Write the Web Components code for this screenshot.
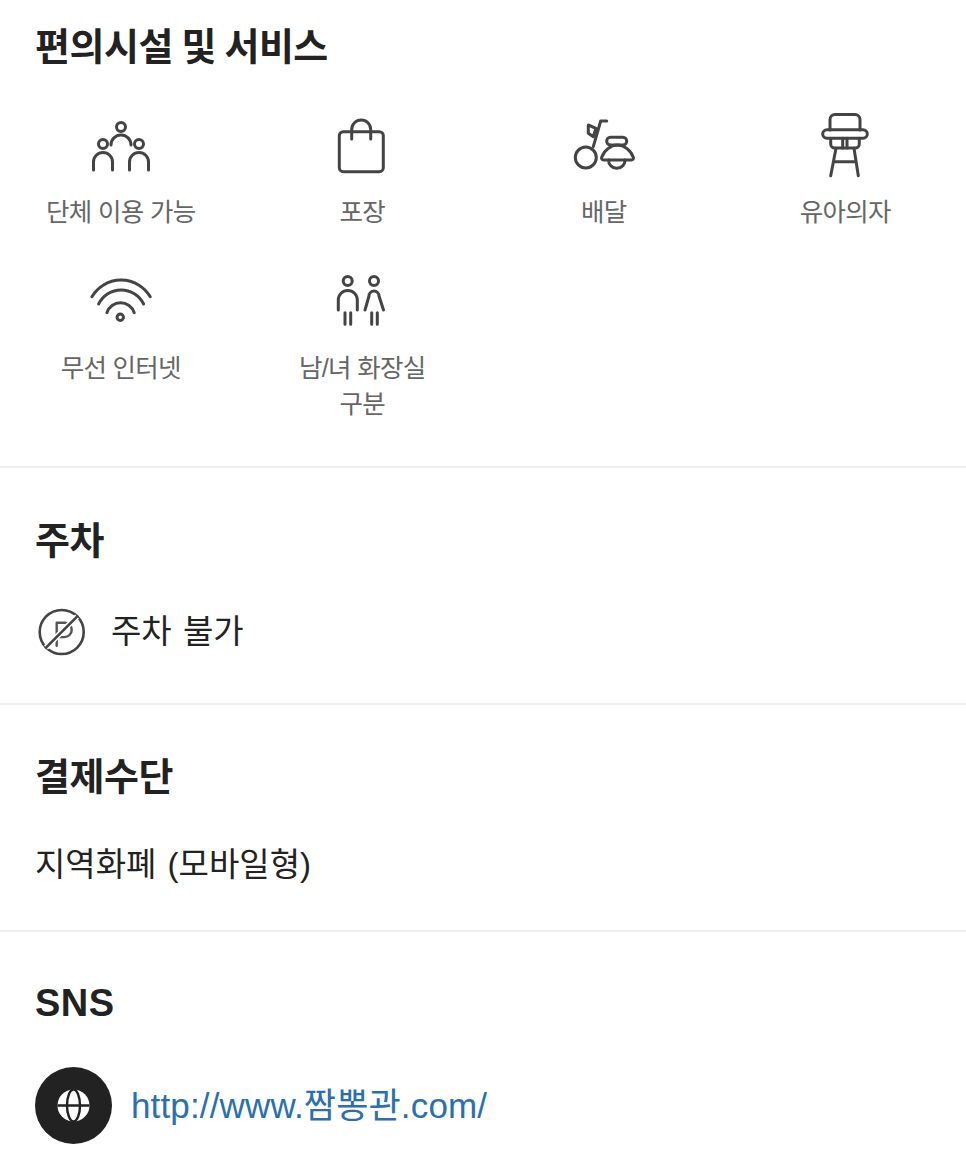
<!DOCTYPE html>
<html lang="ko">
<head>
<meta charset="utf-8">
<title>편의시설 및 서비스</title>
<style>
  html, body { margin: 0; background: #fff; }
  body { font-family: "Liberation Sans", "Noto Sans CJK KR", sans-serif; color: #222; height: 1165px; overflow: hidden; }
</style>
</head>
<body>
<info-section heading="편의시설 및 서비스" top="23" gap="33" bottom="44">
  <facility-grid>
    <facility-item icon="group">단체 이용 가능</facility-item>
    <facility-item icon="bag">포장</facility-item>
    <facility-item icon="scooter">배달</facility-item>
    <facility-item icon="chair">유아의자</facility-item>
    <facility-item icon="wifi">무선 인터넷</facility-item>
    <facility-item icon="restroom">남/녀 화장실<br>구분</facility-item>
  </facility-grid>
</info-section>
<info-section heading="주차" top="49" gap="41" bottom="45">
  <icon-row icon="noparking">주차 불가</icon-row>
</info-section>
<info-section heading="결제수단" top="48" gap="40" bottom="41">
  <plain-row>지역화폐 (모바일형)</plain-row>
</info-section>
<info-section heading="SNS" top="47" gap="40" bottom="0" last>
  <link-row href="#">http://www.짬뽕관.com/</link-row>
</info-section>

<script>
const ICONS = {
  group: `<circle cx="36" cy="23" r="4.5"/><path d="M26 41a10 10 0 0 1 20 0"/><circle cx="18" cy="40" r="4.5"/><path d="M8.5 66V58a9.5 9.5 0 0 1 19 0V66"/><circle cx="54" cy="40" r="4.5"/><path d="M44.5 66V58a9.5 9.5 0 0 1 19 0V66"/>`,
  bag: `<rect x="13.3" y="27.7" width="44" height="40" rx="4"/><path d="M25.7 35V25.5a9.5 9.5 0 0 1 19 0V35"/>`,
  scooter: `<circle cx="17.8" cy="53.5" r="10.5"/><path d="M38.7 17H32.7L25.3 42.7"/><path d="M20.3 21L28 24.3L25.3 32.7L20.3 29.3Z"/><rect x="38.7" y="33.3" width="20" height="7.7" rx="3.8"/><path d="M35.5 56H63.5a2 2 0 0 0 1.9-2.6C63 46.5 56 41 49.5 41C43 41 36 46.5 33.6 53.4a2 2 0 0 0 1.9 2.6Z"/><path d="M40.5 56a8.3 8.3 0 0 0 16.6 0"/>`,
  chair: `<path d="M21 26V15.5a5 5 0 0 1 5-5H46a5 5 0 0 1 5 5V26"/><rect x="13.7" y="25.7" width="44.6" height="8.6" rx="4.3"/><path d="M21.7 34.3V40a4 4 0 0 0 4 4H46.3a4 4 0 0 0 4-4V34.3"/><path d="M33.7 34.3V44M38 34.3V44"/><path d="M27 44.3L21.7 71.7M45 44.3L49.3 71.7M24.5 57.7H47"/>`,
  wifi: `<path d="M6.9 36.7A33.9 33.9 0 0 1 65.25 36.7"/><path d="M13.6 44A25 25 0 0 1 58.6 44"/><path d="M21.9 52.7A14.4 14.4 0 0 1 49.25 52.7"/><circle cx="35.25" cy="57.3" r="3.2"/>`,
  restroom: `<circle cx="21.7" cy="21" r="4.5"/><path d="M12.3 50V40a9.5 9.5 0 0 1 19 0V50"/><path d="M19 52.7V64.3M24.7 52.7V64.3"/><circle cx="48" cy="21" r="4.5"/><path d="M39 50L43 36a5 5 0 0 1 10 0L57.5 50"/><path d="M45.7 52.7V64.3M51.3 52.7V64.3"/>`
};

class InfoSection extends HTMLElement {
  constructor() {
    super();
    const root = this.attachShadow({ mode: "open" });
    root.innerHTML = `
      <style>
        :host { display: block; border-bottom: 2px solid #eeeeee; }
        :host([last]) { border-bottom: none; }
        h2 {
          margin: 0;
          font-size: 38px;
          line-height: 48px;
          font-weight: 700;
          color: #222;
          letter-spacing: -0.5px;
          word-spacing: -1.5px;
        }
        :host([last]) h2 { letter-spacing: 0.5px; }
        .wrap { padding: 0 35px; }
      </style>
      <div class="wrap"><h2></h2></div>
      <slot></slot>
    `;
  }

  connectedCallback() {
    this.shadowRoot.querySelector("h2").textContent = this.getAttribute("heading");
    this.style.paddingTop = this.getAttribute("top") + "px";
    this.style.paddingBottom = this.getAttribute("bottom") + "px";
    this.shadowRoot.querySelector(".wrap").style.marginBottom = this.getAttribute("gap") + "px";
  }
}

class FacilityGrid extends HTMLElement {
  constructor() {
    super();
    const root = this.attachShadow({ mode: "open" });
    root.innerHTML = `
      <style>
        :host { display: grid; grid-template-columns: repeat(4, 1fr); row-gap: 30px; }
      </style>
      <slot></slot>
    `;
  }
}

class FacilityItem extends HTMLElement {
  constructor() {
    super();
    const root = this.attachShadow({ mode: "open" });
    root.innerHTML = `
      <style>
        :host {
          display: flex;
          flex-direction: column;
          align-items: center;
          text-align: center;
          font-size: 25.5px;
          line-height: 36px;
          color: #666;
          letter-spacing: -0.7px;
        }
        svg {
          width: 72px;
          height: 72px;
          margin-bottom: 18px;
          overflow: visible;
          fill: none;
          stroke: #444;
          stroke-width: 3;
          stroke-linecap: round;
          stroke-linejoin: round;
        }
      </style>
      <svg viewBox="0 0 72 72"></svg>
      <slot></slot>
    `;
  }

  connectedCallback() {
    this.shadowRoot.querySelector("svg").innerHTML = ICONS[this.getAttribute("icon")];
  }
}

class IconRow extends HTMLElement {
  constructor() {
    super();
    const root = this.attachShadow({ mode: "open" });
    root.innerHTML = `
      <style>
        :host {
          display: flex;
          align-items: center;
          gap: 24px;
          padding: 0 35px;
          font-size: 33px;
          line-height: 52px;
          color: #222;
          word-spacing: 2px;
        }
        svg { width: 52px; height: 52px; flex: none; fill: none; stroke: #444; stroke-width: 2.6; stroke-linecap: round; stroke-linejoin: round; }
      </style>
      <svg viewBox="0 0 52 52">
        <circle cx="26.7" cy="26" r="22"/>
        <path d="M21.7 39.7V16.7H29.5a7.2 7.2 0 0 1 0 14.4H21.7" stroke="#555" stroke-width="2.4"/>
        <path d="M42 10.5L11 41.5" stroke="#fff" stroke-width="5.5" stroke-linecap="butt"/>
        <path d="M42.3 10.3L11 41.7"/>
      </svg>
      <slot></slot>
    `;
  }
}

class PlainRow extends HTMLElement {
  constructor() {
    super();
    const root = this.attachShadow({ mode: "open" });
    root.innerHTML = `
      <style>
        :host { display: block; padding: 0 35px; font-size: 33px; line-height: 48px; color: #222; word-spacing: 2px; }
      </style>
      <slot></slot>
    `;
  }
}

class LinkRow extends HTMLElement {
  constructor() {
    super();
    const root = this.attachShadow({ mode: "open" });
    root.innerHTML = `
      <style>
        :host { display: flex; align-items: center; gap: 19px; padding: 0 35px; }
        .badge {
          width: 77px;
          height: 77px;
          border-radius: 50%;
          background: #222;
          display: flex;
          align-items: center;
          justify-content: center;
          flex: none;
        }
        svg { width: 33px; height: 33px; }
        a { color: #2a6fb0; text-decoration: none; font-size: 35px; line-height: 48px; letter-spacing: 0.15px; }
      </style>
      <div class="badge">
        <svg viewBox="0 0 33 33">
          <circle cx="16.5" cy="16.5" r="16" fill="#fff"/>
          <g fill="none" stroke="#222" stroke-width="2.4">
            <ellipse cx="16.5" cy="16.5" rx="6.5" ry="16"/>
            <path d="M0.5 16.5H32.5"/>
          </g>
        </svg>
      </div>
      <a><slot></slot></a>
    `;
  }

  connectedCallback() {
    this.shadowRoot.querySelector("a").href = this.getAttribute("href");
  }
}

customElements.define("info-section", InfoSection);
customElements.define("facility-grid", FacilityGrid);
customElements.define("facility-item", FacilityItem);
customElements.define("icon-row", IconRow);
customElements.define("plain-row", PlainRow);
customElements.define("link-row", LinkRow);
</script>
</body>
</html>
